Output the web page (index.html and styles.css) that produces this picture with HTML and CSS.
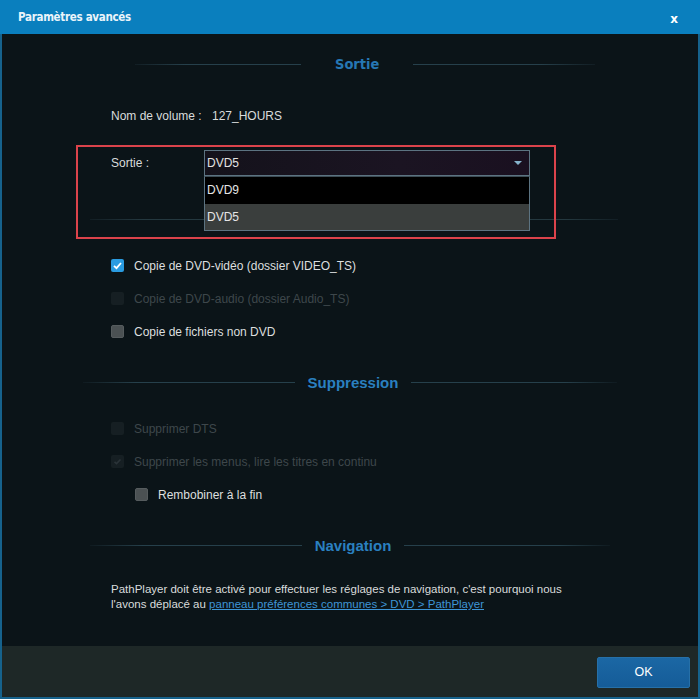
FILE: index.html
```html
<!DOCTYPE html>
<html lang="fr">
<head>
<meta charset="utf-8">
<title>Paramètres avancés</title>
<link rel="stylesheet" href="styles.css">
</head>
<body>
<div class="window">
  <div class="titlebar">
    <span class="title">Paramètres avancés</span>
    <span class="close">x</span>
  </div>
  <div class="frame">
    <div class="content">
      <div class="section-head head-sortie">
        <span class="line line-left"></span>
        <span class="head-text condensed">Sortie</span>
        <span class="line line-right"></span>
      </div>

      <div class="field-row row-name">
        <span class="field-label">Nom de volume :</span>
        <span class="field-value">127_HOURS</span>
      </div>

      <div class="field-row row-output">
        <span class="field-label">Sortie :</span>
        <div class="select">
          <span class="select-value">DVD5</span>
          <span class="select-arrow"></span>
          <ul class="options">
            <li class="option">DVD9</li>
            <li class="option option-selected">DVD5</li>
          </ul>
        </div>
      </div>

      <div class="separator"></div>

      <div class="checks checks-first">
        <div class="check-row">
          <span class="box box-checked"><svg viewBox="0 0 13 13" width="13" height="13"><path d="M3 6.8 L5.5 9.2 L10 4" fill="none" stroke="#ffffff" stroke-width="1.8"/></svg></span>
          <span class="check-label">Copie de DVD-vidéo (dossier VIDEO_TS)</span>
        </div>
        <div class="check-row disabled">
          <span class="box box-disabled"></span>
          <span class="check-label">Copie de DVD-audio (dossier Audio_TS)</span>
        </div>
        <div class="check-row">
          <span class="box box-empty"></span>
          <span class="check-label">Copie de fichiers non DVD</span>
        </div>
      </div>

      <div class="section-head head-supp">
        <span class="line line-left"></span>
        <span class="head-text">Suppression</span>
        <span class="line line-right"></span>
      </div>

      <div class="checks checks-second">
        <div class="check-row disabled">
          <span class="box box-disabled"></span>
          <span class="check-label">Supprimer DTS</span>
        </div>
        <div class="check-row disabled">
          <span class="box box-disabled"><svg viewBox="0 0 13 13" width="13" height="13"><path d="M3.5 6.8 L5.5 8.6 L9.5 4.5" fill="none" stroke="#2a3338" stroke-width="1.6"/></svg></span>
          <span class="check-label">Supprimer les menus, lire les titres en continu</span>
        </div>
        <div class="check-row indent">
          <span class="box box-empty"></span>
          <span class="check-label">Rembobiner à la fin</span>
        </div>
      </div>

      <div class="section-head head-nav">
        <span class="line line-left"></span>
        <span class="head-text">Navigation</span>
        <span class="line line-right"></span>
      </div>

      <p class="nav-text">PathPlayer doit être activé pour effectuer les réglages de navigation, c'est pourquoi nous<br>l'avons déplacé au <a class="nav-link" href="#">panneau préférences communes &gt; DVD &gt; PathPlayer</a></p>

      <div class="annotation"></div>
    </div>
    <div class="footer">
      <button class="ok-btn">OK</button>
    </div>
  </div>
</div>
</body>
</html>
```

FILE: styles.css
```css
* { box-sizing: border-box; }
html, body { margin: 0; padding: 0; background: #0b1418; }
body {
  font-family: "Liberation Sans", Arial, sans-serif;
  font-size: 12px;
  color: #d9dcdc;
}
.window {
  width: 700px;
  height: 699px;
  display: flex;
  flex-direction: column;
  background: #0b1418;
}
.titlebar {
  height: 34px;
  flex: 0 0 34px;
  background: #0a7fbe;
  display: flex;
  align-items: center;
  justify-content: space-between;
  padding: 0 22px 0 18px;
}
.title {
  font-family: "DejaVu Sans", sans-serif;
  font-stretch: condensed;
  font-weight: bold;
  font-size: 11.5px;
  letter-spacing: -0.3px;
  color: #eaf4fa;
}
.close {
  font-family: "DejaVu Sans", sans-serif;
  font-weight: bold;
  font-size: 12px;
  color: #ffffff;
  margin-top: 3px;
}
.frame {
  flex: 1 1 auto;
  display: flex;
  flex-direction: column;
  border-left: 2px solid #16628c;
  border-right: 2px solid #16628c;
  border-bottom: 2px solid #16628c;
}
.content {
  flex: 1 1 auto;
  position: relative;
  padding: 18px 0 0 0;
}
.section-head {
  height: 24px;
  display: flex;
  align-items: center;
  justify-content: center;
}
.head-text {
  font-weight: bold;
  font-size: 15px;
  color: #2a80c0;
  padding: 0 12px;
}
.head-sortie {
  justify-content: flex-start;
  padding-left: 133px;
}
.head-text.condensed {
  font-family: "DejaVu Sans", sans-serif;
  font-stretch: condensed;
  font-weight: bold;
  font-size: 14.5px;
  color: #2677b4;
  padding: 0 34px;
}
.line {
  height: 1px;
  background: #22353f;
}
.head-sortie .line-left { width: 166px; background: linear-gradient(90deg, rgba(34,53,63,0.3), #26404b 30%, #26404b); }
.head-sortie .line-right { width: 182px; background: linear-gradient(90deg, #26404b, #26404b 70%, rgba(34,53,63,0.3)); }
.head-supp .line-left,
.head-nav .line-left { width: 212px; background: linear-gradient(90deg, rgba(34,53,63,0.2), #26404b 25%, #26404b); }
.head-supp .line-right,
.head-nav .line-right { width: 206px; background: linear-gradient(90deg, #26404b, #26404b 75%, rgba(34,53,63,0.2)); }
.head-supp { margin-top: 22px; }
.head-nav { margin-top: 22px; }
.head-supp .head-text { padding: 0 13px; }
.head-nav .head-text { padding: 0 13px; }

.field-row {
  display: flex;
  align-items: center;
  padding-left: 109px;
}
.row-name {
  margin-top: 30px;
  height: 20px;
}
.row-name .field-label { width: 101px; }
.row-output {
  margin-top: 24px;
  height: 26px;
}
.row-output .field-label { width: 93px; }
.select {
  position: relative;
  width: 326px;
  height: 26px;
  border: 1px solid #5c7381;
  background: linear-gradient(90deg, #14121b, #1b1422 60%, #1a1020);
  display: flex;
  align-items: center;
  padding-left: 2px;
  color: #e2e2e2;
}
.select-value { flex: 1; }
.select-arrow {
  width: 0;
  height: 0;
  border-left: 4px solid transparent;
  border-right: 4px solid transparent;
  border-top: 4px solid #86b3cc;
  margin-right: 7px;
}
.options {
  position: absolute;
  top: 25px;
  left: -1px;
  width: 326px;
  margin: 0;
  padding: 0;
  list-style: none;
  border: 1px solid #5c7381;
  border-top-color: #3d4d56;
  z-index: 2;
}
.option {
  height: 26.5px;
  line-height: 26px;
  padding-left: 2px;
  background: #000000;
  color: #e6e6e6;
}
.option-selected {
  background: #3a3e3d;
  height: 26px;
}

.separator {
  margin: 43px 80px 0 88px;
  height: 1px;
  background: linear-gradient(90deg, rgba(34,53,63,0.3), #24383f 10%, #24383f 90%, rgba(34,53,63,0.3));
}

.checks { padding-left: 109px; }
.checks-first { margin-top: 29px; }
.checks-second { margin-top: 18px; }
.check-row {
  display: flex;
  align-items: center;
  height: 33px;
}
.check-row.indent { padding-left: 24px; }
.box {
  width: 13px;
  height: 13px;
  border-radius: 2px;
  margin-right: 10px;
  display: flex;
  flex: 0 0 13px;
}
.box-checked { background: #2a9be0; }
.box-disabled { background: #161f23; }
.box-empty { background: #4b5153; border: 1px solid #565c5e; }
.check-label { color: #dcdfdf; }
.check-row.disabled .check-label { color: #3e474b; }

.nav-text {
  margin: 25px 0 0 0;
  padding-left: 109px;
  line-height: 15px;
  color: #d9dcdc;
  font-size: 11.5px;
}
.nav-link {
  color: #3e95d6;
  text-decoration: underline;
}

.annotation {
  position: absolute;
  left: 74px;
  top: 111px;
  width: 480px;
  height: 94px;
  border: 2px solid #dc434b;
  pointer-events: none;
  z-index: 3;
}

.footer {
  flex: 0 0 51px;
  height: 51px;
  background: #1e2827;
  display: flex;
  align-items: center;
  justify-content: flex-end;
  padding-right: 8px;
}
.ok-btn {
  width: 93px;
  height: 31px;
  border: 1px solid #2670a8;
  border-radius: 2px;
  background: linear-gradient(180deg, #1b67a4, #155c98);
  color: #ffffff;
  font-family: "Liberation Sans", Arial, sans-serif;
  font-size: 12.5px;
  margin-top: 1px;
}
```
